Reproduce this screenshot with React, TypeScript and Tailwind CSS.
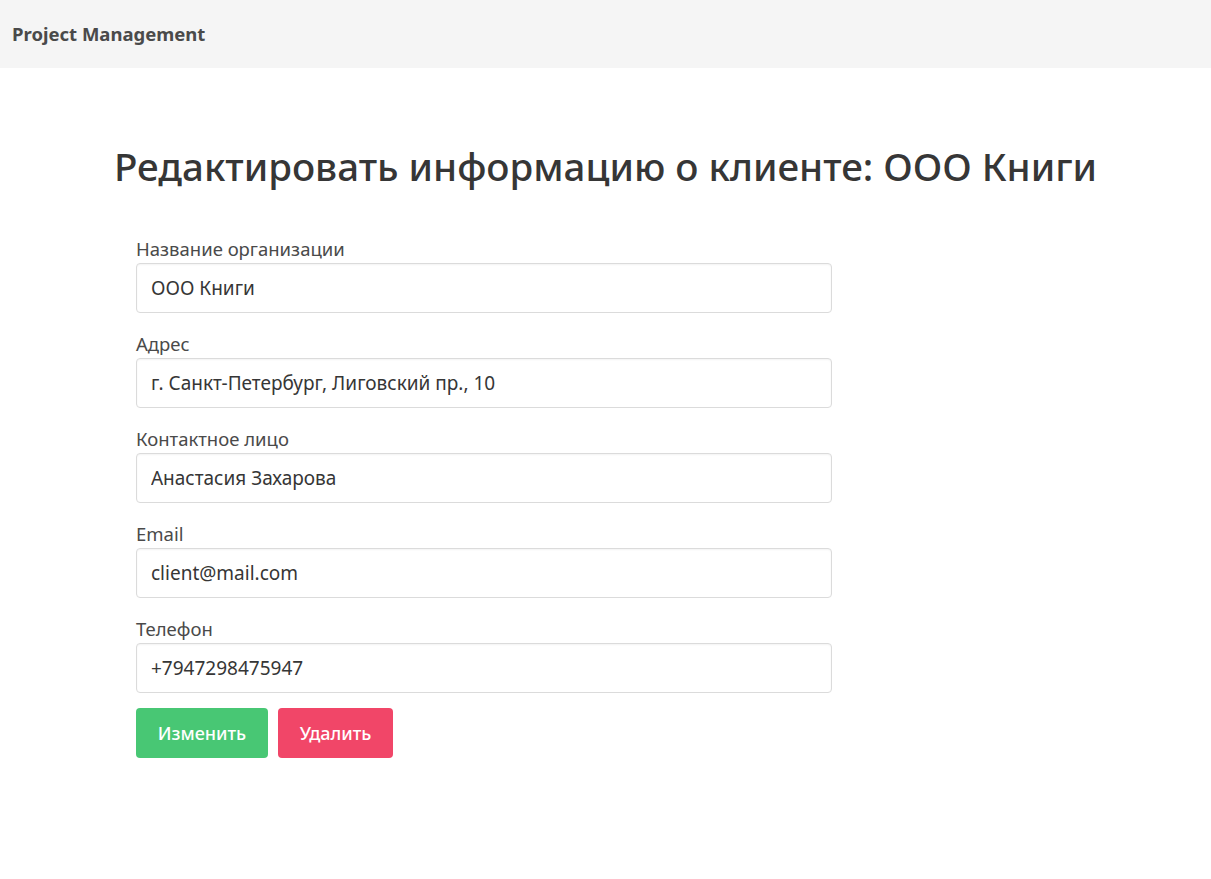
import React, { FormEvent, useState } from "react";

const fields = [
  { label: "Название организации", name: "name", value: "ООО Книги" },
  { label: "Адрес", name: "address", value: "г. Санкт-Петербург, Лиговский пр., 10" },
  { label: "Контактное лицо", name: "contact", value: "Анастасия Захарова" },
  { label: "Email", name: "email", value: "client@mail.com" },
  { label: "Телефон", name: "phone", value: "+7947298475947" },
];

const App = () => {
  const [clientData, setClientData] = useState<Record<string, string>>(
    Object.fromEntries(fields.map((f) => [f.name, f.value]))
  );

  const handleSubmit = (event: FormEvent) => {
    event.preventDefault();
    console.log(clientData);
  };

  return (
    <div className="min-h-screen bg-white text-[#4a4a4a] font-['Noto_Sans',sans-serif]">
      <nav className="flex items-center h-[68px] bg-[#f5f5f5] px-3">
        <span className="text-[18.5px] font-bold text-[#4a4a4a]">Project Management</span>
      </nav>

      <main className="pt-[74px]">
        <h1 className="text-center text-[38.5px] leading-[48px] font-medium text-[#363636]">
          Редактировать информацию о клиенте: {clientData.name}
        </h1>

        <form onSubmit={handleSubmit} className="w-[696px] ml-[136px] mt-[46px]">
          <div className="flex flex-col gap-[18px]">
            {fields.map((field) => (
              <div key={field.name}>
                <label className="block text-[18.5px] leading-[26px] mb-[1px] text-[#4a4a4a]">
                  {field.label}
                </label>
                <input
                  type="text"
                  value={clientData[field.name]}
                  onChange={(event) =>
                    setClientData({ ...clientData, [field.name]: event.target.value })
                  }
                  className="w-full h-[50px] px-[14px] border border-[#dbdbdb] rounded-[4px] text-[19px] text-[#363636] outline-none shadow-[inset_0_1px_2px_rgba(10,10,10,0.05)]"
                />
              </div>
            ))}
          </div>

          <div className="flex gap-[10px] mt-[15px]">
            <button
              type="submit"
              className="h-[50px] w-[132px] rounded-[4px] bg-[#48c774] text-white text-[18px] font-medium"
            >
              Изменить
            </button>
            <button
              type="button"
              className="h-[50px] w-[115px] rounded-[4px] bg-[#f14668] text-white text-[18px] font-medium"
            >
              Удалить
            </button>
          </div>
        </form>
      </main>
    </div>
  );
};

export default App;
